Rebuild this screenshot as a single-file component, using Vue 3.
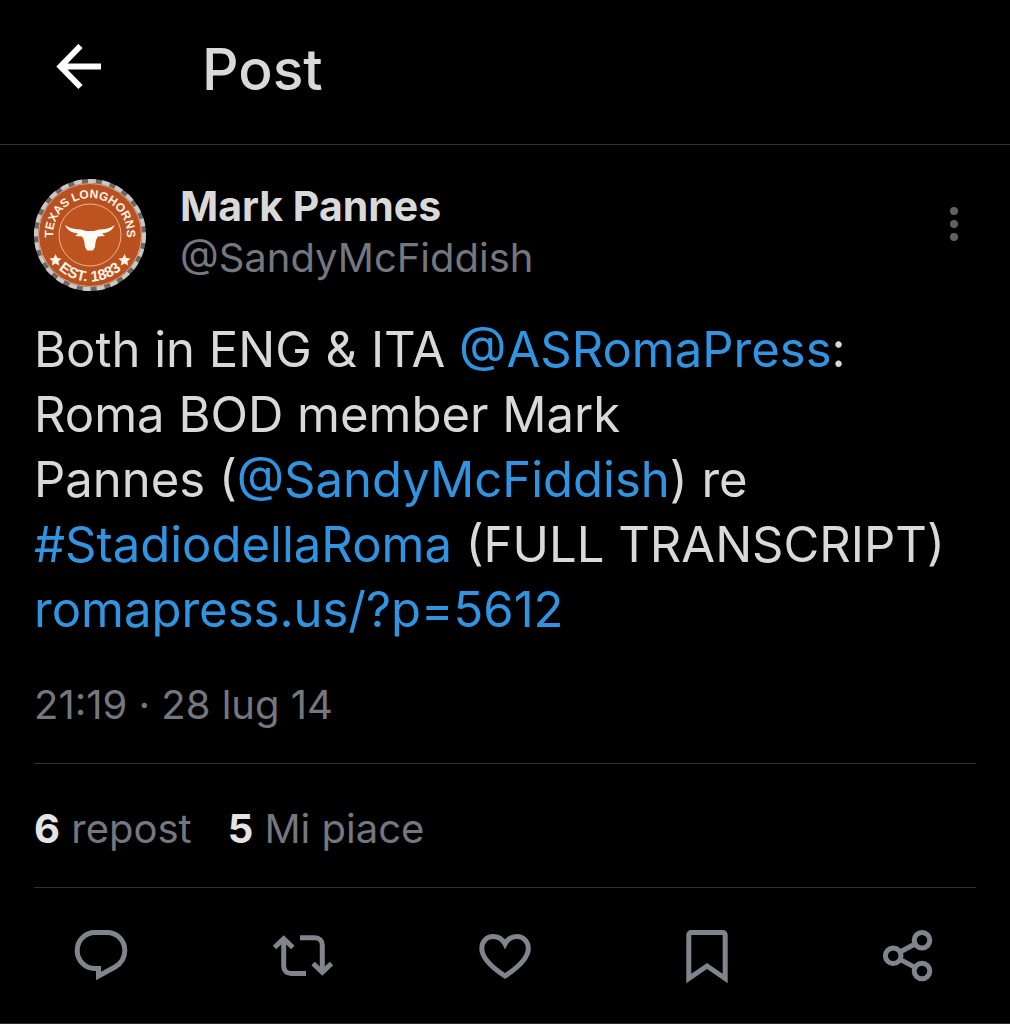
<script setup>
const stats = [
  { count: 6, label: 'repost' },
  { count: 5, label: 'Mi piace' },
]

const actions = [
  {
    name: 'Rispondi',
    paths: [
      'M24 7.5H36C46 7.5 53.8 15.5 53.8 25.5C53.8 32.5 50 38.5 44 42L27.5 51V43.5H24C14 43.5 6.2 35.5 6.2 25.5S14 7.5 24 7.5Z',
    ],
  },
  {
    name: 'Repost',
    paths: [
      'M1.5 22.5L10.7 13.7L19.9 22.5',
      'M10.7 14V41C10.7 45.5 13.7 48.5 18.2 48.5H33',
      'M40.1 38.5L49.3 47.3L58.5 38.5',
      'M49.3 47V20.2C49.3 15.7 46.3 12.7 41.8 12.7H27',
    ],
  },
  {
    name: 'Mi piace',
    paths: [
      'M30 51C17 42.5 6.8 33.5 6.8 23.5C6.8 16 12 11.5 18 11.5C23 11.5 27.5 14 30 19C32.5 14 37 11.5 42 11.5C48 11.5 53.3 16 53.3 23.5C53.3 33.5 43 42.5 30 51Z',
    ],
  },
  {
    name: 'Segnalibro',
    paths: ['M11.8 53.5V10A2.5 2.5 0 0 1 14.3 7.5H45.7A2.5 2.5 0 0 1 48.2 10V53.5L30 41Z'],
  },
  {
    name: 'Condividi',
    paths: [
      'M22 30.7A7.8 7.8 0 1 1 6.4 30.7A7.8 7.8 0 1 1 22 30.7Z',
      'M50.8 15.3A7.8 7.8 0 1 1 35.2 15.3A7.8 7.8 0 1 1 50.8 15.3Z',
      'M50.8 46A7.8 7.8 0 1 1 35.2 46A7.8 7.8 0 1 1 50.8 46Z',
      'M21 27L36 19M21 34.4L36 42.4',
    ],
  },
]
</script>

<template>
  <div class="screen">
    <header class="topbar">
      <button class="icon-button back" type="button" aria-label="Indietro">
        <svg width="46" height="46" viewBox="0 0 46 46">
          <path d="M24.5 2L4.5 22.5L24.5 43M5 22.5H45" />
        </svg>
      </button>
      <h1>Post</h1>
    </header>

    <main>
      <article class="post">
        <div class="author">
          <svg class="avatar" width="112" height="112" viewBox="0 0 112 112" role="img" aria-label="Texas Longhorns">
            <defs>
              <path id="arc-top" d="M29.8 82.2A37 37 0 1 1 82.2 82.2" />
              <path id="arc-bottom" d="M12 72A47 47 0 0 0 100 72" />
            </defs>
            <circle cx="56" cy="56" r="56" fill="#6e6865" />
            <circle cx="56" cy="56" r="54" fill="none" stroke="#cbc7c4" stroke-width="4" stroke-dasharray="8 6" />
            <circle cx="56" cy="56" r="51.5" fill="#b9501f" stroke="#dfa388" stroke-width="1" />
            <circle cx="56" cy="56" r="31" fill="#bd541f" stroke="#f0b48c" stroke-width="1" />
            <text class="seal"><textPath href="#arc-top" startOffset="50%">TEXAS LONGHORNS</textPath></text>
            <text class="seal year"><textPath href="#arc-bottom" startOffset="50%">EST. 1883</textPath></text>
            <path
              fill="#fff4e8"
              d="M21.500 75l1.800 4 4.200.500-3.100 2.900.8 4.200-3.700-2.100-3.700 2.100.8-4.200-3.100-2.900 4.200-.5zM90.500 75l1.800 4 4.200.500-3.100 2.900.8 4.200-3.700-2.100-3.700 2.100.8-4.200-3.100-2.900 4.200-.5z"
            />
            <path
              fill="#fffaf3"
              d="M31 46C36 49.500 41 50.500 47 50.500L52 52H60L65 50.500C71 50.500 76 49.500 80.500 46C79 51 75 53.500 68 54.500L71 57L64 57.500C62 60 61.500 63 61 68L59 71.500H53L51 68C50.500 63 50 60 48 57.500L41 57L44 54.500C37 53.500 33 51 31 46Z"
            />
          </svg>
          <div class="names">
            <strong>Mark Pannes</strong>
            <span>@SandyMcFiddish</span>
          </div>
          <button class="icon-button more" type="button" aria-label="Altro">
            <svg width="10" height="36" viewBox="0 0 10 36">
              <circle cx="5" cy="5" r="4" />
              <circle cx="5" cy="18" r="4" />
              <circle cx="5" cy="31" r="4" />
            </svg>
          </button>
        </div>

        <p class="text">
          Both in ENG &amp; ITA <a href="#ASRomaPress">@ASRomaPress</a>:<br />
          Roma BOD member Mark<br />
          Pannes (<a href="#SandyMcFiddish">@SandyMcFiddish</a>) re<br />
          <a href="#StadiodellaRoma">#StadiodellaRoma</a> (FULL TRANSCRIPT)<br />
          <a href="#5612">romapress.us/?p=5612</a>
        </p>

        <time class="date" datetime="2014-07-28T21:19">21:19 · 28 lug 14</time>

        <div class="stats">
          <span v-for="stat in stats" :key="stat.label"><b>{{ stat.count }}</b> {{ stat.label }}</span>
        </div>
      </article>

      <div class="actions">
        <button v-for="action in actions" :key="action.name" class="icon-button" type="button" :aria-label="action.name">
          <svg width="60" height="60" viewBox="0 0 60 60">
            <path v-for="d in action.paths" :key="d" :d="d" />
          </svg>
        </button>
      </div>
    </main>
  </div>
</template>

<style>
body {
  margin: 0;
  background: #000;
}
</style>

<style scoped>
.screen {
  background: #000;
  color: #d9d9d9;
  font-family: Inter, 'Noto Sans', sans-serif;
  border-bottom: 1px solid #2f2d2d;
}

.icon-button {
  display: flex;
  align-items: center;
  justify-content: center;
  padding: 0;
  border: 0;
  background: none;
  color: #80848c;
}

.icon-button path {
  fill: none;
  stroke: currentColor;
  stroke-width: 5;
}

.topbar {
  display: flex;
  align-items: center;
  gap: 100px;
  height: 144px;
  padding: 0 56px;
  border-bottom: 1px solid #333;
}

.back {
  margin-bottom: 10px;
  color: #fff;
}

.back path {
  stroke-width: 6;
}

h1 {
  margin: 0 0 4px;
  font-size: 57px;
  line-height: 64px;
  font-weight: 500;
}

.post {
  padding: 34px 34px 0;
}

.author {
  display: flex;
  align-items: center;
  gap: 34px;
}

.avatar {
  flex: none;
}

.seal {
  fill: #fff4e8;
  font-family: 'Liberation Sans', sans-serif;
  font-size: 12px;
  font-weight: 700;
  text-anchor: middle;
}

.seal.year {
  font-size: 15px;
}

.names {
  display: flex;
  flex-direction: column;
  flex: 1;
  padding-bottom: 6px;
  font-size: 41px;
  line-height: 51px;
}

.names span {
  color: #74777e;
  font-size: 40px;
}

.more {
  align-self: flex-start;
  margin: 27px 17px 0 0;
  color: #606060;
}

.more circle {
  fill: currentColor;
}

.text {
  margin: 26px 0 0;
  font-size: 49px;
  line-height: 65px;
  white-space: nowrap;
}

a {
  color: #3194e0;
  text-decoration: none;
}

.date {
  display: block;
  margin-top: 37px;
  padding-bottom: 33px;
  border-bottom: 1px solid #2f3133;
  color: #74777e;
  font-size: 40px;
  line-height: 51px;
}

.stats {
  display: flex;
  gap: 36px;
  padding: 39px 0 33px;
  border-bottom: 1px solid #2f3133;
  color: #74777e;
  font-size: 40px;
  line-height: 51px;
}

.stats b {
  color: #e4e4e4;
}

.actions {
  display: grid;
  grid-template-columns: repeat(5, 1fr);
  padding: 37px 0 38px;
}

.actions svg {
  overflow: visible;
}
</style>
